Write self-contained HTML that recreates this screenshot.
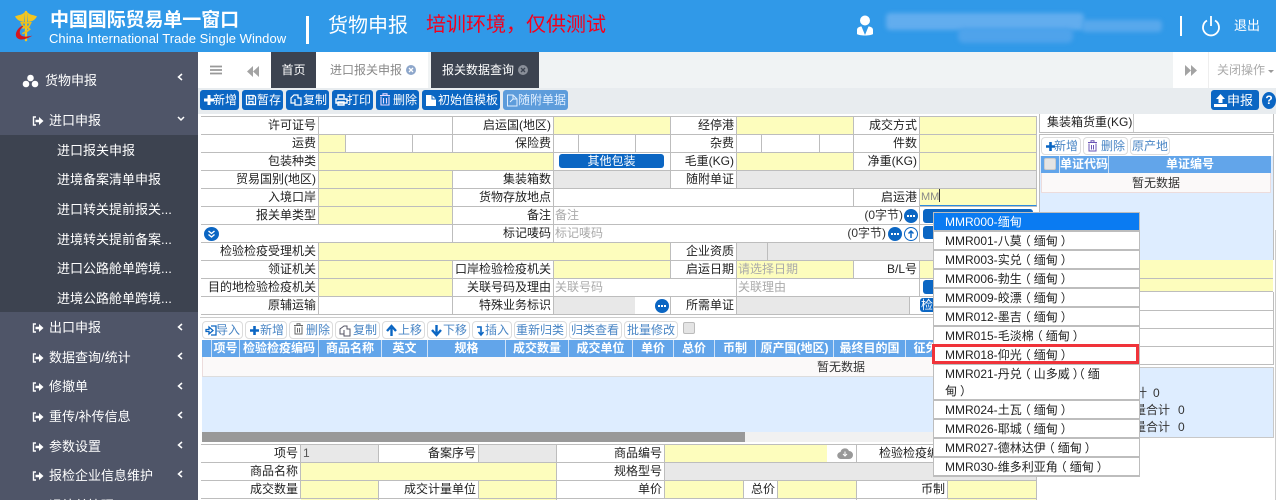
<!DOCTYPE html>
<html lang="zh"><head><meta charset="utf-8"><title>货物申报</title>
<style>
*{box-sizing:border-box;margin:0;padding:0}
html,body{width:1276px;height:500px;overflow:hidden;background:#fff}
body{position:relative;font:12px/18px "Liberation Sans","Noto Sans CJK SC",sans-serif;color:#222}
.a{position:absolute;white-space:nowrap}
svg{display:block;overflow:visible}
.s{position:absolute;left:0;top:52px;width:198px;height:448px;background:#4f5568}
.m{position:absolute;color:#fff;font-size:13px;line-height:20px;white-space:nowrap}
.m svg{position:absolute;left:-17px;top:5px}
.ch{position:absolute;left:177px}
.sub{position:absolute;left:57px;color:#fff;font-size:13px;line-height:20px;white-space:nowrap}
.b{position:absolute;top:90px;height:20px;background:#0b66c3;border-radius:3px;color:#fff;line-height:21px;font-size:12px;white-space:nowrap;text-align:right;padding-right:2px}
.b svg{position:absolute;left:3px;top:4px}
.r{position:absolute;left:201px;width:836px;height:18px;border-bottom:1px solid #bdbdbd}
.c{position:absolute;top:0;height:17px;line-height:17px;border-right:1px solid #bdbdbd;white-space:nowrap;overflow:hidden}
.l{text-align:right;padding-right:2px}
.y{background:#fdfdbd}.g{background:#e8e8e8}
.p{color:#aaa;padding-left:1px}
.t{position:absolute;top:321px;height:18px;border:1px solid #dcdcdc;border-radius:4px;background:#fff;color:#4a86c5;text-align:right;padding-right:2px;line-height:17px;white-space:nowrap}
.t svg{position:absolute;left:3px;top:3px}
.h{position:absolute;top:340px;height:17px;line-height:17px;color:#fff;font-weight:bold;text-align:center;border-right:1px solid #cfe2f7;white-space:nowrap;overflow:hidden}
.d{position:absolute;left:934px;width:205px;height:17px;background:#fff;line-height:17px;padding:1px 0 0 11px;color:#222}
.d u{text-decoration:none}
.d s{text-decoration:none;position:relative;left:-3px}
.d s.q{left:3px}
.o{position:absolute;width:14px;height:14px;border-radius:50%;background:#0b66c3}
.o:after{content:"";position:absolute;left:3px;top:6px;width:8px;height:2px;background:repeating-linear-gradient(90deg,#fff 0 2px,transparent 2px 3px)}
.bb{position:absolute;background:#0b66c3;border-radius:3px}
</style></head><body>
<svg width="0" height="0" style="position:absolute"><defs>
<symbol id="si" viewBox="0 0 12 10"><path d="M4 1H1.500V9H4" fill="none" stroke="#fff" stroke-width="1.400"/><path d="M3.500 3.700H7V1L11.500 5 7 9V6.300H3.500Z" fill="#fff"/></symbol>
<symbol id="cl" viewBox="0 0 6 8"><path d="M5 1L1.500 4 5 7" fill="none" stroke="#fff" stroke-width="1.500"/></symbol>
</defs></svg>

<!-- header -->
<div class="a" style="left:0;top:0;width:1276px;height:52px;background:#3099e8"></div>
<svg class="a" style="left:14px;top:10px" width="24" height="33" viewBox="0 0 26 36">
<path d="M12 2C8 6 5 5 1 7c2 4 6 6 10 6ZM14 2c4 4 7 3 11 5-2 4-6 6-10 6Z" fill="#f2c51f"/>
<rect x="11.800" y="1" width="2.400" height="33" fill="#f2c51f"/>
<path d="M8 14h10l-2 4h-6ZM9 20c4-2 6-1 8 1-3 3-5 3-8 5" fill="none" stroke="#e8bd1f" stroke-width="1.800"/>
<path d="M9 17C2 21 0 28 4 31c4 3 11 0 16-3-5 1-11 2-13-1-2-3 0-7 3-9Z" fill="#d5161e"/>
</svg>
<div class="a" style="left:50px;top:9px;font-size:19px;line-height:24px;font-weight:bold;color:#fff;letter-spacing:-.1px">中国国际贸易单一窗口</div>
<div class="a" style="left:49px;top:30px;font-size:13px;line-height:18px;color:#fff;letter-spacing:.04px">China International Trade Single Window</div>
<div class="a" style="left:306px;top:16px;width:3px;height:28px;background:#fff"></div>
<div class="a" style="left:328px;top:12px;font-size:20px;line-height:28px;color:#fff">货物申报</div>
<div class="a" style="left:426px;top:11px;font-size:20px;line-height:28px;color:#f4001c">培训环境，仅供测试</div>
<div class="a" style="left:886px;top:13px;width:198px;height:17px;background:#62adee;filter:blur(2px);border-radius:4px"></div>
<div class="a" style="left:1082px;top:20px;width:80px;height:12px;background:#58a8ec;filter:blur(2px);border-radius:4px"></div>
<div class="a" style="left:958px;top:28px;width:115px;height:15px;background:#4fa3eb;filter:blur(2px);border-radius:6px"></div>
<svg class="a" style="left:856px;top:15px" width="18" height="22" viewBox="0 0 18 22"><circle cx="9" cy="5.500" r="5" fill="#fff"/><path d="M1 19V15c0-2.500 2.500-3.500 4.500-3.500L9 20l3.500-8.500c2 0 4.500 1 4.500 3.500v4c-2 2-14 2-16 0Z" fill="#fff"/></svg>
<div class="a" style="left:1180px;top:16px;width:2px;height:20px;background:#fff"></div>
<svg class="a" style="left:1201px;top:15px" width="20" height="22" viewBox="0 0 20 22"><path d="M6 5.500a8 8 0 1 0 8 0M10 1v10" fill="none" stroke="#fff" stroke-width="1.800"/></svg>
<div class="a" style="left:1234px;top:16px;font-size:13px;line-height:20px;color:#fff">退出</div>

<!-- tab bar -->
<div class="a" style="left:198px;top:52px;width:1078px;height:36px;background:#f0f3f4"></div>
<div class="a" style="left:198px;top:52px;width:73px;height:36px;background:#fff"></div>
<svg class="a" style="left:210px;top:65px" width="12" height="10"><path d="M0 1.500H12M0 5H12M0 8.500H12" stroke="#999" stroke-width="1.800"/></svg>
<svg class="a" style="left:247px;top:66px" width="13" height="11"><path d="M6 0V11L0 5.500ZM12 0V11L6 5.500Z" fill="#a3a3a3"/></svg>
<div class="a" style="left:271px;top:52px;width:45px;height:36px;background:#3c4350;color:#fff;text-align:center;line-height:37px;font-size:12px">首页</div>
<div class="a" style="left:316px;top:52px;width:112px;height:36px;background:#fff;color:#888;line-height:37px;padding-left:14px;font-size:12px">进口报关申报</div>
<svg class="a" style="left:406px;top:65px" width="10" height="10"><circle cx="5" cy="5" r="5" fill="#8ea7cb"/><path d="M3 3L7 7M7 3L3 7" stroke="#fff" stroke-width="1.300"/></svg>
<div class="a" style="left:431px;top:52px;width:108px;height:36px;background:#3c4350;color:#fff;line-height:37px;padding-left:11px;font-size:12px">报关数据查询</div>
<svg class="a" style="left:518px;top:65px" width="10" height="10"><circle cx="5" cy="5" r="5" fill="#8a8f99"/><path d="M3 3L7 7M7 3L3 7" stroke="#3c4350" stroke-width="1.300"/></svg>
<div class="a" style="left:1173px;top:52px;width:103px;height:36px;background:#fff"></div>
<div class="a" style="left:1208px;top:52px;width:1px;height:36px;background:#eee"></div>
<svg class="a" style="left:1185px;top:65px" width="13" height="11"><path d="M0 0V11L6 5.500ZM6 0V11L12 5.500Z" fill="#a3a3a3"/></svg>
<div class="a" style="left:1217px;top:52px;line-height:37px;color:#aaa;font-size:12px">关闭操作</div>
<div class="a" style="left:1268px;top:70px;border:3px solid transparent;border-top:3px solid #999"></div>

<!-- sidebar -->
<div class="s"></div>
<div class="a" style="left:0;top:135px;width:198px;height:177px;background:#3d4350"></div>
<div class="m" style="left:45px;top:71px"><svg style="left:-23px;top:3px" width="17" height="14" viewBox="0 0 17 14"><circle cx="8.500" cy="4" r="3.300" fill="#fff"/><circle cx="4" cy="10" r="3.300" fill="#fff"/><circle cx="13" cy="10" r="3.300" fill="#fff"/></svg>货物申报</div>
<svg class="ch" style="top:73px" width="6" height="8"><use href="#cl"/></svg>
<div class="m" style="left:49px;top:111px"><svg width="12" height="10"><use href="#si"/></svg>进口申报</div>
<svg class="a" style="left:177px;top:116px" width="8" height="6"><path d="M1 1L4 4 7 1" fill="none" stroke="#fff" stroke-width="1.500"/></svg>
<div class="sub" style="top:141px">进口报关申报</div>
<div class="sub" style="top:170px">进境备案清单申报</div>
<div class="sub" style="top:200px">进口转关提前报关...</div>
<div class="sub" style="top:230px">进境转关提前备案...</div>
<div class="sub" style="top:259px">进口公路舱单跨境...</div>
<div class="sub" style="top:289px">进境公路舱单跨境...</div>
<div class="m" style="left:49px;top:318px"><svg width="12" height="10"><use href="#si"/></svg>出口申报</div><svg class="ch" style="top:323px" width="6" height="8"><use href="#cl"/></svg>
<div class="m" style="left:49px;top:348px"><svg width="12" height="10"><use href="#si"/></svg>数据查询/统计</div><svg class="ch" style="top:352px" width="6" height="8"><use href="#cl"/></svg>
<div class="m" style="left:49px;top:377px"><svg width="12" height="10"><use href="#si"/></svg>修撤单</div><svg class="ch" style="top:382px" width="6" height="8"><use href="#cl"/></svg>
<div class="m" style="left:49px;top:407px"><svg width="12" height="10"><use href="#si"/></svg>重传/补传信息</div><svg class="ch" style="top:411px" width="6" height="8"><use href="#cl"/></svg>
<div class="m" style="left:49px;top:437px"><svg width="12" height="10"><use href="#si"/></svg>参数设置</div><svg class="ch" style="top:441px" width="6" height="8"><use href="#cl"/></svg>
<div class="m" style="left:49px;top:466px"><svg width="12" height="10"><use href="#si"/></svg>报检企业信息维护</div><svg class="ch" style="top:470px" width="6" height="8"><use href="#cl"/></svg>
<div class="m" style="left:49px;top:496px">退补单管理</div>

<!-- top toolbar -->
<div class="a" style="left:198px;top:88px;width:1078px;height:26px;background:#e8ecef"></div>
<div class="b" style="left:200px;width:39px"><svg width="12" height="12"><path d="M6 1V11M1 6H11" stroke="#fff" stroke-width="3"/></svg>新增</div>
<div class="b" style="left:242px;width:41px"><svg width="12" height="12"><path d="M1.500 1.500H9L10.500 3V10.500H1.500ZM4 1.500V5H8V1.500M4 10.500V7.500H8V10.500" fill="none" stroke="#fff" stroke-width="1.200"/></svg>暂存</div>
<div class="b" style="left:286px;width:43px"><svg width="13" height="13"><path d="M5 1H9V4H12V11H6V9H2V4ZM6 5V9" fill="none" stroke="#fff" stroke-width="1.200"/></svg>复制</div>
<div class="b" style="left:332px;width:41px"><svg width="13" height="12"><path d="M3 4V1H9V4M1 5H12V9H1ZM3 8H9V11H3Z" fill="none" stroke="#fff" stroke-width="1.400"/></svg>打印</div>
<div class="b" style="left:376px;width:43px"><svg width="12" height="13" style="top:3px"><path d="M1 2.500H11M4 2V.8H8V2M2 3.500V12H10V3.500M4.500 5V10.500M7.500 5V10.500" fill="none" stroke="#e9d8ff" stroke-width="1.100"/></svg>删除</div>
<div class="b" style="left:422px;width:78px"><svg width="13" height="13"><path d="M1 1H7L11 5V12H1Z" fill="#fff"/><path d="M7 1V5H11" fill="none" stroke="#0b66c3"/></svg>初始值模板</div>
<div class="b" style="left:503px;width:65px;background:#5d9cdb;color:#dfeeff"><svg width="13" height="13"><path d="M1.500 1H7L11 5V12H1.500ZM7 1V5H11M4 8L7 5" fill="none" stroke="#dfeeff"/></svg>随附单据</div>
<div class="b" style="left:1211px;width:48px;height:20px"><svg width="13" height="13"><path d="M6.500 0L11 5H8.500V9H4.500V5H2ZM0 10H13V13H0Z" fill="#fff"/></svg><span style="font-size:13px;margin-right:4px">申报</span></div>
<div class="a" style="left:1262px;top:92px;width:14px;height:17px;border-radius:50%;background:#0b66c3;color:#fff;font-size:12px;line-height:17px;text-align:center;font-weight:bold">?</div>

<!-- form -->
<div class="a" style="left:201px;top:116px;width:836px;height:1px;background:#bdbdbd"></div>
<div class="r" style="top:117px">
<div class="c l" style="left:0;width:118px">许可证号</div><div class="c" style="left:118px;width:134px"></div><div class="c l" style="left:252px;width:101px">启运国(地区)</div><div class="c y" style="left:353px;width:117px"></div><div class="c l" style="left:470px;width:66px">经停港</div><div class="c y" style="left:536px;width:117px"></div><div class="c l" style="left:653px;width:66px">成交方式</div><div class="c y" style="left:719px;width:117px"></div></div>
<div class="r" style="top:135px">
<div class="c l" style="left:0;width:118px">运费</div><div class="c y" style="left:118px;width:27px"></div><div class="c" style="left:145px;width:67px"></div><div class="c" style="left:212px;width:40px"></div><div class="c l" style="left:252px;width:101px">保险费</div><div class="c" style="left:353px;width:25px"></div><div class="c" style="left:378px;width:57px"></div><div class="c" style="left:435px;width:35px"></div><div class="c l" style="left:470px;width:66px">杂费</div><div class="c" style="left:536px;width:25px"></div><div class="c" style="left:561px;width:58px"></div><div class="c" style="left:619px;width:34px"></div><div class="c l" style="left:653px;width:66px">件数</div><div class="c y" style="left:719px;width:117px"></div></div>
<div class="r" style="top:153px">
<div class="c l" style="left:0;width:118px">包装种类</div><div class="c y" style="left:118px;width:235px"></div><div class="c" style="left:353px;width:117px"><div class="a" style="left:5px;top:1px;width:105px;height:14px;border-radius:3px;background:#0b66c3;color:#fff;text-align:center;line-height:15px">其他包装</div></div><div class="c l" style="left:470px;width:66px">毛重(KG)</div><div class="c y" style="left:536px;width:117px"></div><div class="c l" style="left:653px;width:66px">净重(KG)</div><div class="c y" style="left:719px;width:117px"></div></div>
<div class="r" style="top:171px">
<div class="c l" style="left:0;width:118px">贸易国别(地区)</div><div class="c y" style="left:118px;width:134px"></div><div class="c l" style="left:252px;width:101px">集装箱数</div><div class="c g" style="left:353px;width:117px"></div><div class="c l" style="left:470px;width:66px">随附单证</div><div class="c g" style="left:536px;width:300px"></div></div>
<div class="r" style="top:189px">
<div class="c l" style="left:0;width:118px">入境口岸</div><div class="c y" style="left:118px;width:134px"></div><div class="c l" style="left:252px;width:101px">货物存放地点</div><div class="c" style="left:353px;width:300px"></div><div class="c l" style="left:653px;width:66px">启运港</div><div class="c y" style="left:719px;width:117px;color:#888;padding-left:1px;border-bottom:1px solid #2a8ae0;line-height:15px"><span style="font-size:11px">MM</span><span style="display:inline-block;width:1px;height:13px;background:#333;vertical-align:-2px"></span></div></div>
<div class="r" style="top:207px">
<div class="c l" style="left:0;width:118px">报关单类型</div><div class="c y" style="left:118px;width:134px"></div><div class="c l" style="left:252px;width:101px">备注</div><div class="c p" style="left:353px;width:366px">备注<span class="a" style="right:16px;color:#333">(0字节)</span><span class="o" style="right:1px;top:2px"></span></div></div>
<div class="r" style="top:225px">
<div class="c" style="left:0;width:252px"><svg class="a" style="left:3px;top:2px" width="15" height="14"><ellipse cx="7.500" cy="7" rx="7.500" ry="7" fill="#0b66c3"/><path d="M4.500 4L7.500 6.500 10.500 4M4.500 7.500L7.500 10 10.500 7.500" fill="none" stroke="#fff" stroke-width="1.400"/></svg></div><div class="c l" style="left:252px;width:101px">标记唛码</div><div class="c p" style="left:353px;width:366px">标记唛码<span class="a" style="right:33px;color:#333">(0字节)</span><span class="o" style="right:17px;top:2px"></span><svg class="a" style="right:1px;top:2px" width="14" height="14"><circle cx="7" cy="7" r="6.500" fill="#fff" stroke="#0b66c3"/><path d="M7 11V4.500M4.500 6.500L7 4 9.500 6.500" fill="none" stroke="#0b66c3" stroke-width="1.500"/></svg></div></div>
<div class="r" style="top:243px">
<div class="c l" style="left:0;width:118px">检验检疫受理机关</div><div class="c y" style="left:118px;width:352px"></div><div class="c l" style="left:470px;width:66px">企业资质</div><div class="c g" style="left:536px;width:31px"></div><div class="c g" style="left:567px;width:269px"></div></div>
<div class="r" style="top:261px">
<div class="c l" style="left:0;width:118px">领证机关</div><div class="c y" style="left:118px;width:134px"></div><div class="c l" style="left:252px;width:101px">口岸检验检疫机关</div><div class="c y" style="left:353px;width:117px"></div><div class="c l" style="left:470px;width:66px">启运日期</div><div class="c y p" style="left:536px;width:117px">请选择日期</div><div class="c l" style="left:653px;width:66px">B/L号</div><div class="c y" style="left:719px;width:117px"></div></div>
<div class="r" style="top:279px">
<div class="c l" style="left:0;width:118px">目的地检验检疫机关</div><div class="c y" style="left:118px;width:134px"></div><div class="c l" style="left:252px;width:101px">关联号码及理由</div><div class="c p" style="left:353px;width:183px">关联号码</div><div class="c p" style="left:536px;width:183px">关联理由</div></div>
<div class="r" style="top:297px">
<div class="c l" style="left:0;width:118px">原辅运输</div><div class="c" style="left:118px;width:134px"></div><div class="c l" style="left:252px;width:101px">特殊业务标识</div><div class="c" style="left:353px;width:117px"><div class="a g" style="left:0;top:0;width:81px;height:17px"></div><span class="o" style="left:101px;top:2px"></span></div><div class="c l" style="left:470px;width:66px">所需单证</div><div class="c g" style="left:536px;width:173px"></div></div>
<div class="bb" style="left:923px;top:209px;width:110px;height:14px"></div>
<div class="bb" style="left:923px;top:226px;width:110px;height:13px"></div>
<div class="bb" style="left:923px;top:280px;width:110px;height:14px"></div>
<div class="bb" style="left:920px;top:298px;width:30px;height:14px;color:#fff;line-height:15px;padding-left:1px">检</div>

<!-- right panel -->
<div class="a" style="left:1039px;top:114px;width:235px;height:19px;border:1px solid #bdbdbd;border-top:0;background:#fff"></div>
<div class="a" style="left:1133px;top:114px;width:1px;height:18px;background:#ccc"></div>
<div class="a" style="left:1047px;top:114px;line-height:17px">集装箱货重(KG)</div>
<div class="a" style="left:1039px;top:134px;width:235px;height:126px;border:1px solid #bdbdbd;border-bottom:0;background:#deedff"></div>
<div class="a" style="left:1040px;top:135px;width:233px;height:21px;background:#fff"></div>
<div class="t" style="left:1041px;top:137px;width:40px"><svg width="11" height="11"><path d="M5.500 1V10M1 5.500H10" stroke="#0b66c3" stroke-width="2.600"/></svg>新增</div>
<div class="t" style="left:1083px;top:137px;width:45px"><svg width="11" height="12" style="top:2px"><path d="M1 2.500H10M4 2V.8H7V2M2 3.500V11H9V3.500M4.500 5V9.500M6.500 5V9.500" fill="none" stroke="#6b55b5"/></svg>删除</div>
<div class="t" style="left:1130px;top:137px;width:40px;padding-right:1px">原产地</div>
<div class="h" style="left:1041px;top:156px;width:19px;border-right:1px solid #cfe2f7;background:#62a5ea"><div class="a" style="left:3px;top:2px;width:12px;height:12px;border-radius:2px;background:#e4e4e4;border:1px solid #ccc"></div></div>
<div class="h" style="left:1060px;top:156px;width:49px;background:#62a5ea">单证代码</div>
<div class="h" style="left:1109px;top:156px;width:162px;background:#62a5ea;border:0">单证编号</div>
<div class="a" style="left:1041px;top:173px;width:230px;height:20px;background:#fbf9f9;border-bottom:1px solid #ecdcdc;border-left:1px solid #ecdcdc;border-right:1px solid #ecdcdc;text-align:center;line-height:20px;color:#333">暂无数据</div>
<div class="a" style="left:1037px;top:260px;width:236px;height:32px;background:#fdfdbd;border-bottom:1px solid #bdbdbd"></div>
<div class="a" style="left:1037px;top:278px;width:236px;height:1px;background:#bdbdbd"></div>
<div class="a" style="left:1037px;top:292px;width:237px;height:73px;border:1px solid #bdbdbd;border-top:0;background:#fff"></div>
<div class="a" style="left:1037px;top:310px;width:237px;height:1px;background:#bdbdbd"></div>
<div class="a" style="left:1037px;top:328px;width:237px;height:1px;background:#bdbdbd"></div>
<div class="a" style="left:1037px;top:346px;width:237px;height:1px;background:#bdbdbd"></div>
<div class="a" style="left:1039px;top:367px;width:235px;height:71px;background:#deedff;border:1px solid #c8c8c8"></div>
<div class="a" style="left:1135px;top:385px;line-height:17px;color:#333">计<span style="margin-left:6px">0</span></div>
<div class="a" style="left:1134px;top:402px;line-height:17px;color:#333">量合计<span style="margin-left:8px">0</span></div>
<div class="a" style="left:1134px;top:419px;line-height:17px;color:#333">量合计<span style="margin-left:8px">0</span></div>
<div class="a" style="left:1275px;top:230px;width:1px;height:270px;background:#ccc"></div>

<!-- goods grid -->
<div class="a" style="left:200px;top:317px;width:837px;height:1px;background:#ccc"></div>
<div class="t" style="left:202px;width:41px"><svg width="11" height="11"><path d="M5 1H10V10H5M0 4.500H3V2L7 5.500 3 9V6.500H0Z" fill="none" stroke="#0b66c3" stroke-width="1.300"/></svg>导入</div>
<div class="t" style="left:245px;width:42px"><svg width="11" height="11"><path d="M5.500 1V10M1 5.500H10" stroke="#0b66c3" stroke-width="2.600"/></svg>新增</div>
<div class="t" style="left:289px;width:44px"><svg width="11" height="12" style="top:1px"><path d="M1 2.500H10M4 2V.8H7V2M2 3.500V11H9V3.500M4.500 5V9.500M6.500 5V9.500" fill="none" stroke="#666"/></svg>删除</div>
<div class="t" style="left:335px;width:45px"><svg width="12" height="12"><path d="M5 1H8V4H11V11H5V9H1V4ZM5 5V9" fill="none" stroke="#556"/></svg>复制</div>
<div class="t" style="left:382px;width:43px"><svg width="11" height="11"><path d="M5.500 11V3M1 6L5.500 1 10 6" fill="none" stroke="#0b66c3" stroke-width="2.400"/></svg>上移</div>
<div class="t" style="left:427px;width:43px"><svg width="11" height="11"><path d="M5.500 0V8M1 5L5.500 10 10 5" fill="none" stroke="#0b66c3" stroke-width="2.400"/></svg>下移</div>
<div class="t" style="left:472px;width:40px"><svg width="9" height="11"><path d="M1 2H5V9M2.500 7L5 10 7.500 7" fill="none" stroke="#0b66c3" stroke-width="1.600"/></svg>插入</div>
<div class="t" style="left:514px;width:53px">重新归类</div>
<div class="t" style="left:569px;width:53px">归类查看</div>
<div class="t" style="left:624px;width:54px">批量修改</div>
<div class="a" style="left:683px;top:322px;width:12px;height:12px;background:#e4e4e4;border:1px solid #bbb;border-radius:2px"></div>
<div class="a" style="left:202px;top:340px;width:835px;height:17px;background:#62a5ea"></div>
<div class="h" style="left:202px;width:10px"></div>
<div class="h" style="left:212px;width:28px">项号</div>
<div class="h" style="left:240px;width:79px">检验检疫编码</div>
<div class="h" style="left:319px;width:63px">商品名称</div>
<div class="h" style="left:382px;width:46px">英文</div>
<div class="h" style="left:428px;width:78px">规格</div>
<div class="h" style="left:506px;width:63px">成交数量</div>
<div class="h" style="left:569px;width:64px">成交单位</div>
<div class="h" style="left:633px;width:41px">单价</div>
<div class="h" style="left:674px;width:41px">总价</div>
<div class="h" style="left:715px;width:41px">币制</div>
<div class="h" style="left:756px;width:78px">原产国(地区)</div>
<div class="h" style="left:834px;width:72px">最终目的国</div>
<div class="h" style="left:906px;width:40px">征免</div>
<div class="a" style="left:202px;top:357px;width:835px;height:20px;background:#fbf9f9;border-bottom:1px solid #ddd;border-left:1px solid #ecdcdc;line-height:20px;color:#333"><span class="a" style="left:614px;top:0">暂无数据</span></div>
<div class="a" style="left:202px;top:377px;width:835px;height:55px;background:#deedff"></div>
<div class="a" style="left:202px;top:432px;width:835px;height:10px;background:#f1f1f1"></div>
<div class="a" style="left:202px;top:432px;width:543px;height:10px;background:#999"></div>

<!-- bottom form -->
<div class="a" style="left:201px;top:444px;width:836px;height:1px;background:#bdbdbd"></div>
<div class="r" style="top:445px">
<div class="c l" style="left:0;width:100px">项号</div><div class="c g" style="left:100px;width:78px;padding-left:2px;color:#555">1</div><div class="c l" style="left:178px;width:100px">备案序号</div><div class="c g" style="left:278px;width:78px"></div><div class="c l" style="left:356px;width:108px">商品编号</div><div class="c y" style="left:464px;width:162px;border:0"></div><div class="c" style="left:626px;width:30px"><svg class="a" style="left:10px;top:3px" width="16" height="11"><path d="M4 11a3.500 3.500 0 0 1-.5-7A4.500 4.500 0 0 1 12 3a4 4 0 0 1 0 8Z" fill="#999"/><path d="M8 3.500V8M6 6L8 8 10 6" stroke="#fff" fill="none"/></svg></div><div class="c l" style="left:656px;width:96px;border:0">检验检疫编码</div></div>
<div class="r" style="top:463px">
<div class="c l" style="left:0;width:100px">商品名称</div><div class="c y" style="left:100px;width:256px"></div><div class="c l" style="left:356px;width:108px">规格型号</div><div class="c g" style="left:464px;width:372px"></div></div>
<div class="r" style="top:481px">
<div class="c l" style="left:0;width:100px">成交数量</div><div class="c y" style="left:100px;width:78px"></div><div class="c l" style="left:178px;width:100px">成交计量单位</div><div class="c y" style="left:278px;width:78px"></div><div class="c l" style="left:356px;width:108px">单价</div><div class="c y" style="left:464px;width:79px"></div><div class="c l" style="left:543px;width:34px">总价</div><div class="c y" style="left:577px;width:79px"></div><div class="c l" style="left:656px;width:91px">币制</div><div class="c y" style="left:747px;width:89px"></div></div>
<div class="r" style="top:499px;border:0">
<div class="c y" style="left:100px;width:78px"></div><div class="c y" style="left:278px;width:78px"></div><div class="c" style="left:464px;width:192px"></div><div class="c y" style="left:747px;width:89px"></div></div>

<!-- dropdown -->
<div class="a" style="left:933px;top:212px;width:207px;height:265px;background:#bdbdbd"></div>
<div class="d" style="top:213px;background:#0a7bf2;color:#fff"><u>MMR000-</u>缅甸</div>
<div class="d" style="top:232px"><u>MMR001-</u>八莫<s>（</s>缅甸<s class="q">）</s></div>
<div class="d" style="top:251px"><u>MMR003-</u>实兑<s>（</s>缅甸<s class="q">）</s></div>
<div class="d" style="top:270px"><u>MMR006-</u>勃生<s>（</s>缅甸<s class="q">）</s></div>
<div class="d" style="top:289px"><u>MMR009-</u>皎漂<s>（</s>缅甸<s class="q">）</s></div>
<div class="d" style="top:308px"><u>MMR012-</u>墨吉<s>（</s>缅甸<s class="q">）</s></div>
<div class="d" style="top:327px"><u>MMR015-</u>毛淡棉<s>（</s>缅甸<s class="q">）</s></div>
<div class="d" style="top:346px"><u>MMR018-</u>仰光<s>（</s>缅甸<s class="q">）</s></div>
<div class="d" style="top:365px;height:34px;white-space:normal;padding-right:30px"><u>MMR021-</u>丹兑<s>（</s>山多威<s class="q">）</s><s>（</s>缅甸<s class="q">）</s></div>
<div class="d" style="top:401px"><u>MMR024-</u>土瓦<s>（</s>缅甸<s class="q">）</s></div>
<div class="d" style="top:420px"><u>MMR026-</u>耶城<s>（</s>缅甸<s class="q">）</s></div>
<div class="d" style="top:439px"><u>MMR027-</u>德林达伊<s>（</s>缅甸<s class="q">）</s></div>
<div class="d" style="top:458px"><u>MMR030-</u>维多利亚角<s>（</s>缅甸<s class="q">）</s></div>
<div class="a" style="left:932px;top:344px;width:207px;height:20px;border:3px solid #f0333a"></div>
</body></html>
